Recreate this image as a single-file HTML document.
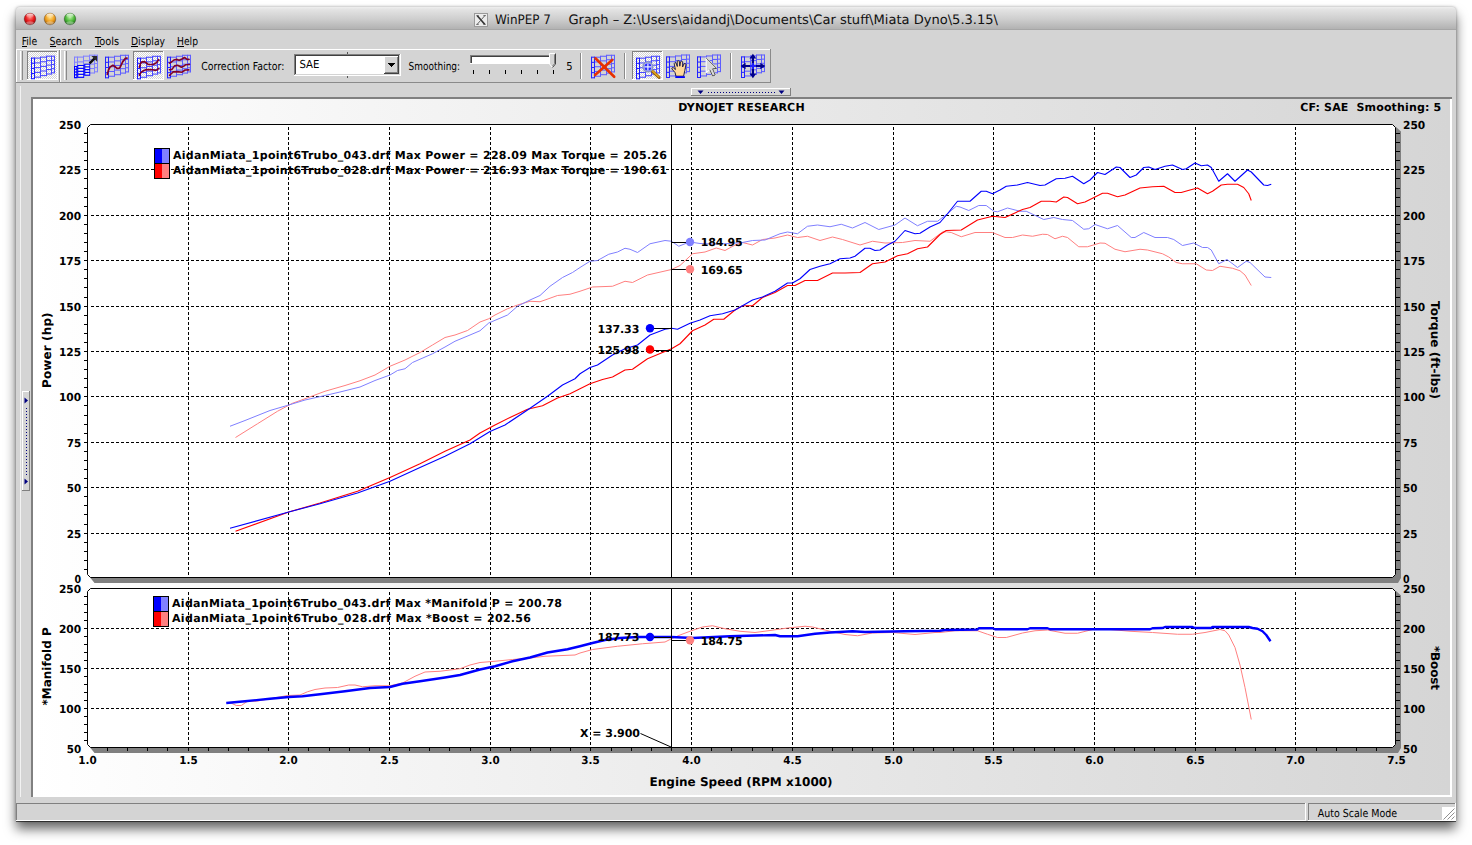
<!DOCTYPE html><html><head><meta charset="utf-8"><title>WinPEP 7</title>
<style>
html,body{margin:0;padding:0;background:#fff;}
body{width:1472px;height:845px;overflow:hidden;position:relative;font-family:"DejaVu Sans","Liberation Sans",sans-serif;}
#win{position:absolute;left:16px;top:7px;width:1440px;height:814px;background:#d4d4d4;border-radius:4px 4px 0 0;
 box-shadow:0 1px 0 rgba(0,0,0,.55),0 8px 12px rgba(0,0,0,.60),0 0 3px rgba(0,0,0,.35);}
#tb{position:absolute;left:0;top:0;width:100%;height:23px;border-radius:4px 4px 0 0;
 background:linear-gradient(#eeeeee 0,#e4e4e4 10%,#cecece 55%,#b2b2b2 100%);border-bottom:1px solid #a6a6a6;box-sizing:border-box}
svg{position:absolute;left:0;top:0}
.b{font-family:"DejaVu Sans","Liberation Sans",sans-serif;font-weight:bold}
.m{font-family:"DejaVu Sans Condensed","DejaVu Sans","Liberation Sans",sans-serif;font-size:11px}
.t{font-family:"DejaVu Sans","Liberation Sans",sans-serif;font-size:13px}
</style></head><body>
<div id="win"><div id="tb"></div></div>
<svg width="1472" height="845" viewBox="0 0 1472 845" shape-rendering="crispEdges" text-rendering="geometricPrecision">
<defs>
<linearGradient id="pg" x1="0" x2="1" y1="0" y2="0"><stop offset="0" stop-color="#ffffff"/><stop offset="1" stop-color="#d5d5d5"/></linearGradient>
<pattern id="dit" width="2" height="2" patternUnits="userSpaceOnUse"><rect width="2" height="2" fill="#ffffff"/><rect width="1" height="1" fill="#d4d4d4"/><rect x="1" y="1" width="1" height="1" fill="#d4d4d4"/></pattern>
<radialGradient id="gr" cx=".5" cy=".35" r=".65"><stop offset="0" stop-color="#ff8a80"/><stop offset=".55" stop-color="#e8191c"/><stop offset="1" stop-color="#8f0a0c"/></radialGradient>
<radialGradient id="gy" cx=".5" cy=".35" r=".65"><stop offset="0" stop-color="#ffe28a"/><stop offset=".55" stop-color="#f0a020"/><stop offset="1" stop-color="#9a5a08"/></radialGradient>
<radialGradient id="gg" cx=".5" cy=".35" r=".65"><stop offset="0" stop-color="#b8f0a0"/><stop offset=".55" stop-color="#4db83a"/><stop offset="1" stop-color="#1f6a18"/></radialGradient>
<linearGradient id="hl" x1="0" x2="0" y1="0" y2="1"><stop offset="0" stop-color="#fff" stop-opacity=".85"/><stop offset="1" stop-color="#fff" stop-opacity="0"/></linearGradient>
</defs>
<g shape-rendering="auto"><circle cx="30" cy="19" r="5.9" fill="url(#gr)" stroke="#000" stroke-opacity=".28" stroke-width=".8"/><ellipse cx="30" cy="15.8" rx="3.6" ry="2.2" fill="url(#hl)"/><ellipse cx="30" cy="23" rx="3.8" ry="1.8" fill="#fff" fill-opacity=".35"/></g>
<g shape-rendering="auto"><circle cx="50" cy="19" r="5.9" fill="url(#gy)" stroke="#000" stroke-opacity=".28" stroke-width=".8"/><ellipse cx="50" cy="15.8" rx="3.6" ry="2.2" fill="url(#hl)"/><ellipse cx="50" cy="23" rx="3.8" ry="1.8" fill="#fff" fill-opacity=".35"/></g>
<g shape-rendering="auto"><circle cx="70" cy="19" r="5.9" fill="url(#gg)" stroke="#000" stroke-opacity=".28" stroke-width=".8"/><ellipse cx="70" cy="15.8" rx="3.6" ry="2.2" fill="url(#hl)"/><ellipse cx="70" cy="23" rx="3.8" ry="1.8" fill="#fff" fill-opacity=".35"/></g>
<g shape-rendering="auto"><rect x="474.5" y="13.5" width="13" height="13" fill="#ececec" stroke="#9a9a9a" stroke-width="1"/><path d="M477.3 15.8 L484.7 24.2" stroke="#333" stroke-width="1.7" fill="none"/><path d="M484.7 15.8 L477.3 24.2" stroke="#555" stroke-width=".9" fill="none"/><path d="M476.3 15.6 h2.4 M483.4 15.6 h2.4 M476.3 24.4 h2.4 M483.4 24.4 h2.4" stroke="#444" stroke-width=".8"/></g>
<text x="495" y="24" class="t" fill="#111" textLength="56" lengthAdjust="spacingAndGlyphs">WinPEP 7</text>
<text x="568.5" y="24" class="t" fill="#111" textLength="429.5" lengthAdjust="spacingAndGlyphs">Graph – Z:\Users\aidandj\Documents\Car stuff\Miata Dyno\5.3.15\</text>
<text x="21.7" y="45" class="m" fill="#000" textLength="15.5" lengthAdjust="spacingAndGlyphs">File</text>
<rect x="21.7" y="46" width="5.5" height="1" fill="#000"/>
<text x="49.5" y="45" class="m" fill="#000" textLength="32.5" lengthAdjust="spacingAndGlyphs">Search</text>
<rect x="49.5" y="46" width="6.5" height="1" fill="#000"/>
<text x="95" y="45" class="m" fill="#000" textLength="24" lengthAdjust="spacingAndGlyphs">Tools</text>
<rect x="95" y="46" width="5.5" height="1" fill="#000"/>
<text x="131" y="45" class="m" fill="#000" textLength="34" lengthAdjust="spacingAndGlyphs">Display</text>
<rect x="131" y="46" width="7" height="1" fill="#000"/>
<text x="177" y="45" class="m" fill="#000" textLength="21" lengthAdjust="spacingAndGlyphs">Help</text>
<rect x="177" y="46" width="7" height="1" fill="#000"/>
<rect x="16" y="49" width="754" height="1" fill="#fff"/><rect x="16" y="49" width="1" height="33" fill="#fff"/>
<rect x="16" y="82" width="755" height="1" fill="#8a8a8a"/><rect x="770" y="49" width="1" height="34" fill="#8a8a8a"/>
<rect x="20" y="51" width="1" height="29" fill="#fff"/><rect x="21" y="51" width="1" height="29" fill="#d4d4d4"/><rect x="22" y="51" width="1" height="29" fill="#8a8a8a"/>
<rect x="64" y="51" width="1" height="29" fill="#fff"/><rect x="65" y="51" width="1" height="29" fill="#d4d4d4"/><rect x="66" y="51" width="1" height="29" fill="#8a8a8a"/>
<rect x="59" y="50" width="1" height="32" fill="#8a8a8a"/><rect x="60" y="50" width="1" height="32" fill="#fff"/>
<rect x="27" y="51" width="31" height="29" fill="url(#dit)"/>
<rect x="27" y="51" width="31" height="1" fill="#808080"/><rect x="27" y="51" width="1" height="29" fill="#808080"/>
<rect x="27" y="79" width="31" height="1" fill="#fff"/><rect x="57" y="51" width="1" height="29" fill="#fff"/>
<rect x="133" y="51" width="31" height="29" fill="url(#dit)"/>
<rect x="133" y="51" width="31" height="1" fill="#808080"/><rect x="133" y="51" width="1" height="29" fill="#808080"/>
<rect x="133" y="79" width="31" height="1" fill="#fff"/><rect x="163" y="51" width="1" height="29" fill="#fff"/>
<rect x="632" y="51" width="31" height="29" fill="url(#dit)"/>
<rect x="632" y="51" width="31" height="1" fill="#808080"/><rect x="632" y="51" width="1" height="29" fill="#808080"/>
<rect x="632" y="79" width="31" height="1" fill="#fff"/><rect x="662" y="51" width="1" height="29" fill="#fff"/>
<rect x="580" y="53" width="1" height="26" fill="#8a8a8a"/><rect x="581" y="53" width="1" height="26" fill="#fff"/>
<rect x="624" y="53" width="1" height="26" fill="#8a8a8a"/><rect x="625" y="53" width="1" height="26" fill="#fff"/>
<rect x="730" y="53" width="1" height="26" fill="#8a8a8a"/><rect x="731" y="53" width="1" height="26" fill="#fff"/>
<g shape-rendering="auto" stroke-width="1.05" fill="none"><line x1="31.50" y1="58.10" x2="34.50" y2="58.10" stroke="#1c1cff"/><line x1="31.50" y1="63.25" x2="34.50" y2="63.25" stroke="#1c1cff"/><line x1="31.50" y1="68.40" x2="34.50" y2="68.40" stroke="#1c1cff"/><line x1="31.50" y1="73.55" x2="34.50" y2="73.55" stroke="#1c1cff"/><line x1="31.50" y1="78.70" x2="34.50" y2="78.70" stroke="#1c1cff"/><line x1="34.50" y1="58.10" x2="40.50" y2="58.10" stroke="#4848ff"/><line x1="34.50" y1="62.86" x2="40.50" y2="62.86" stroke="#4848ff"/><line x1="34.50" y1="67.62" x2="40.50" y2="67.62" stroke="#4848ff"/><line x1="34.50" y1="72.39" x2="40.50" y2="72.39" stroke="#4848ff"/><line x1="34.50" y1="77.15" x2="40.50" y2="77.15" stroke="#4848ff"/><line x1="40.50" y1="57.15" x2="46.50" y2="57.15" stroke="#4848ff"/><line x1="40.50" y1="61.76" x2="46.50" y2="61.76" stroke="#4848ff"/><line x1="40.50" y1="66.38" x2="46.50" y2="66.38" stroke="#4848ff"/><line x1="40.50" y1="70.99" x2="46.50" y2="70.99" stroke="#4848ff"/><line x1="40.50" y1="75.60" x2="46.50" y2="75.60" stroke="#4848ff"/><line x1="46.50" y1="56.20" x2="51.50" y2="56.20" stroke="#4848ff"/><line x1="46.50" y1="60.65" x2="51.50" y2="60.65" stroke="#4848ff"/><line x1="46.50" y1="65.10" x2="51.50" y2="65.10" stroke="#4848ff"/><line x1="46.50" y1="69.55" x2="51.50" y2="69.55" stroke="#4848ff"/><line x1="46.50" y1="74.00" x2="51.50" y2="74.00" stroke="#4848ff"/><line x1="51.50" y1="56.20" x2="54.50" y2="56.20" stroke="#4848ff"/><line x1="51.50" y1="60.35" x2="54.50" y2="60.35" stroke="#4848ff"/><line x1="51.50" y1="64.50" x2="54.50" y2="64.50" stroke="#4848ff"/><line x1="51.50" y1="68.65" x2="54.50" y2="68.65" stroke="#4848ff"/><line x1="51.50" y1="72.80" x2="54.50" y2="72.80" stroke="#4848ff"/><line x1="31.50" y1="57.60" x2="31.50" y2="79.20" stroke="#1c1cff"/><line x1="34.50" y1="57.60" x2="34.50" y2="79.20" stroke="#1c1cff"/><line x1="40.50" y1="56.65" x2="40.50" y2="77.65" stroke="#4848ff"/><line x1="46.50" y1="55.70" x2="46.50" y2="76.10" stroke="#4848ff"/><line x1="51.50" y1="55.70" x2="51.50" y2="74.50" stroke="#4848ff"/><line x1="54.50" y1="55.70" x2="54.50" y2="73.30" stroke="#4848ff"/></g>
<g shape-rendering="auto" stroke-width="1.05" fill="none"><line x1="74.50" y1="57.10" x2="77.50" y2="57.10" stroke="#8080ff"/><line x1="74.50" y1="62.25" x2="77.50" y2="62.25" stroke="#8080ff"/><line x1="74.50" y1="67.40" x2="77.50" y2="67.40" stroke="#8080ff"/><line x1="74.50" y1="72.55" x2="77.50" y2="72.55" stroke="#8080ff"/><line x1="74.50" y1="77.70" x2="77.50" y2="77.70" stroke="#8080ff"/><line x1="77.50" y1="57.10" x2="83.50" y2="57.10" stroke="#8080ff"/><line x1="77.50" y1="61.86" x2="83.50" y2="61.86" stroke="#8080ff"/><line x1="77.50" y1="66.62" x2="83.50" y2="66.62" stroke="#8080ff"/><line x1="77.50" y1="71.39" x2="83.50" y2="71.39" stroke="#8080ff"/><line x1="77.50" y1="76.15" x2="83.50" y2="76.15" stroke="#8080ff"/><line x1="83.50" y1="56.15" x2="89.50" y2="56.15" stroke="#8080ff"/><line x1="83.50" y1="60.76" x2="89.50" y2="60.76" stroke="#8080ff"/><line x1="83.50" y1="65.38" x2="89.50" y2="65.38" stroke="#8080ff"/><line x1="83.50" y1="69.99" x2="89.50" y2="69.99" stroke="#8080ff"/><line x1="83.50" y1="74.60" x2="89.50" y2="74.60" stroke="#8080ff"/><line x1="89.50" y1="55.20" x2="94.50" y2="55.20" stroke="#8080ff"/><line x1="89.50" y1="59.65" x2="94.50" y2="59.65" stroke="#8080ff"/><line x1="89.50" y1="64.10" x2="94.50" y2="64.10" stroke="#8080ff"/><line x1="89.50" y1="68.55" x2="94.50" y2="68.55" stroke="#8080ff"/><line x1="89.50" y1="73.00" x2="94.50" y2="73.00" stroke="#8080ff"/><line x1="94.50" y1="55.20" x2="97.50" y2="55.20" stroke="#8080ff"/><line x1="94.50" y1="59.35" x2="97.50" y2="59.35" stroke="#8080ff"/><line x1="94.50" y1="63.50" x2="97.50" y2="63.50" stroke="#8080ff"/><line x1="94.50" y1="67.65" x2="97.50" y2="67.65" stroke="#8080ff"/><line x1="94.50" y1="71.80" x2="97.50" y2="71.80" stroke="#8080ff"/><line x1="74.50" y1="56.60" x2="74.50" y2="78.20" stroke="#8080ff"/><line x1="77.50" y1="56.60" x2="77.50" y2="78.20" stroke="#8080ff"/><line x1="83.50" y1="55.65" x2="83.50" y2="76.65" stroke="#8080ff"/><line x1="89.50" y1="54.70" x2="89.50" y2="75.10" stroke="#8080ff"/><line x1="94.50" y1="54.70" x2="94.50" y2="73.50" stroke="#8080ff"/><line x1="97.50" y1="54.70" x2="97.50" y2="72.30" stroke="#8080ff"/></g>
<g shape-rendering="auto"><rect x="74.0" y="66.0" width="3.2" height="12.2" fill="#0000ff"/><rect x="77.2" y="65.0" width="7.0" height="12.9" fill="#0000ff"/><rect x="84.2" y="63.7" width="6.0" height="12.1" fill="#0000ff"/><rect x="75.10" y="67.00" width="1.20" height="1.60" fill="#f2f2e6"/><rect x="75.10" y="69.80" width="1.20" height="1.60" fill="#f2f2e6"/><rect x="75.10" y="72.60" width="1.20" height="1.60" fill="#f2f2e6"/><rect x="75.10" y="75.40" width="1.20" height="1.60" fill="#f2f2e6"/><rect x="78.30" y="66.00" width="5.00" height="1.78" fill="#f2f2e6"/><rect x="78.30" y="68.97" width="5.00" height="1.78" fill="#f2f2e6"/><rect x="78.30" y="71.95" width="5.00" height="1.78" fill="#f2f2e6"/><rect x="78.30" y="74.93" width="5.00" height="1.78" fill="#f2f2e6"/><rect x="85.30" y="64.70" width="4.00" height="1.57" fill="#f2f2e6"/><rect x="85.30" y="67.47" width="4.00" height="1.57" fill="#f2f2e6"/><rect x="85.30" y="70.25" width="4.00" height="1.57" fill="#f2f2e6"/><rect x="85.30" y="73.03" width="4.00" height="1.57" fill="#f2f2e6"/><path d="M89.6 63.4 L94.6 58.4" stroke="#101010" stroke-width="2.4"/><path d="M91.4 56 H97.2 V61.8 Z" fill="#282828"/></g>
<g shape-rendering="auto" stroke-width="1.05" fill="none"><line x1="105.50" y1="57.20" x2="108.50" y2="57.20" stroke="#2424ff"/><line x1="105.50" y1="62.35" x2="108.50" y2="62.35" stroke="#2424ff"/><line x1="105.50" y1="67.50" x2="108.50" y2="67.50" stroke="#2424ff"/><line x1="105.50" y1="72.65" x2="108.50" y2="72.65" stroke="#2424ff"/><line x1="105.50" y1="77.80" x2="108.50" y2="77.80" stroke="#2424ff"/><line x1="108.50" y1="57.20" x2="114.50" y2="57.20" stroke="#5e5eff"/><line x1="108.50" y1="61.96" x2="114.50" y2="61.96" stroke="#5e5eff"/><line x1="108.50" y1="66.72" x2="114.50" y2="66.72" stroke="#5e5eff"/><line x1="108.50" y1="71.49" x2="114.50" y2="71.49" stroke="#5e5eff"/><line x1="108.50" y1="76.25" x2="114.50" y2="76.25" stroke="#5e5eff"/><line x1="114.50" y1="56.25" x2="120.50" y2="56.25" stroke="#5e5eff"/><line x1="114.50" y1="60.86" x2="120.50" y2="60.86" stroke="#5e5eff"/><line x1="114.50" y1="65.47" x2="120.50" y2="65.47" stroke="#5e5eff"/><line x1="114.50" y1="70.09" x2="120.50" y2="70.09" stroke="#5e5eff"/><line x1="114.50" y1="74.70" x2="120.50" y2="74.70" stroke="#5e5eff"/><line x1="120.50" y1="55.30" x2="125.50" y2="55.30" stroke="#5e5eff"/><line x1="120.50" y1="59.75" x2="125.50" y2="59.75" stroke="#5e5eff"/><line x1="120.50" y1="64.20" x2="125.50" y2="64.20" stroke="#5e5eff"/><line x1="120.50" y1="68.65" x2="125.50" y2="68.65" stroke="#5e5eff"/><line x1="120.50" y1="73.10" x2="125.50" y2="73.10" stroke="#5e5eff"/><line x1="125.50" y1="55.30" x2="128.50" y2="55.30" stroke="#5e5eff"/><line x1="125.50" y1="59.45" x2="128.50" y2="59.45" stroke="#5e5eff"/><line x1="125.50" y1="63.60" x2="128.50" y2="63.60" stroke="#5e5eff"/><line x1="125.50" y1="67.75" x2="128.50" y2="67.75" stroke="#5e5eff"/><line x1="125.50" y1="71.90" x2="128.50" y2="71.90" stroke="#5e5eff"/><line x1="105.50" y1="56.70" x2="105.50" y2="78.30" stroke="#2424ff"/><line x1="108.50" y1="56.70" x2="108.50" y2="78.30" stroke="#2424ff"/><line x1="114.50" y1="55.75" x2="114.50" y2="76.75" stroke="#5e5eff"/><line x1="120.50" y1="54.80" x2="120.50" y2="75.20" stroke="#5e5eff"/><line x1="125.50" y1="54.80" x2="125.50" y2="73.60" stroke="#5e5eff"/><line x1="128.50" y1="54.80" x2="128.50" y2="72.40" stroke="#5e5eff"/></g>
<polyline shape-rendering="auto" fill="none" stroke-linejoin="round" stroke-linecap="round" stroke="#800028" stroke-width="1.7" points="107.3,74.4 108.5,70.0 110.1,66.9 112.9,65.3 114.8,66.5 117.0,68.4 119.5,68.1 121.0,65.5 122.6,61.9 125.4,58.4 127.0,58.1"/>
<g shape-rendering="auto" stroke-width="1.05" fill="none"><line x1="137.50" y1="58.20" x2="140.50" y2="58.20" stroke="#1c1cff"/><line x1="137.50" y1="63.35" x2="140.50" y2="63.35" stroke="#1c1cff"/><line x1="137.50" y1="68.50" x2="140.50" y2="68.50" stroke="#1c1cff"/><line x1="137.50" y1="73.65" x2="140.50" y2="73.65" stroke="#1c1cff"/><line x1="137.50" y1="78.80" x2="140.50" y2="78.80" stroke="#1c1cff"/><line x1="140.50" y1="58.20" x2="146.50" y2="58.20" stroke="#4848ff"/><line x1="140.50" y1="62.96" x2="146.50" y2="62.96" stroke="#4848ff"/><line x1="140.50" y1="67.72" x2="146.50" y2="67.72" stroke="#4848ff"/><line x1="140.50" y1="72.49" x2="146.50" y2="72.49" stroke="#4848ff"/><line x1="140.50" y1="77.25" x2="146.50" y2="77.25" stroke="#4848ff"/><line x1="146.50" y1="57.25" x2="152.50" y2="57.25" stroke="#4848ff"/><line x1="146.50" y1="61.86" x2="152.50" y2="61.86" stroke="#4848ff"/><line x1="146.50" y1="66.47" x2="152.50" y2="66.47" stroke="#4848ff"/><line x1="146.50" y1="71.09" x2="152.50" y2="71.09" stroke="#4848ff"/><line x1="146.50" y1="75.70" x2="152.50" y2="75.70" stroke="#4848ff"/><line x1="152.50" y1="56.30" x2="157.50" y2="56.30" stroke="#4848ff"/><line x1="152.50" y1="60.75" x2="157.50" y2="60.75" stroke="#4848ff"/><line x1="152.50" y1="65.20" x2="157.50" y2="65.20" stroke="#4848ff"/><line x1="152.50" y1="69.65" x2="157.50" y2="69.65" stroke="#4848ff"/><line x1="152.50" y1="74.10" x2="157.50" y2="74.10" stroke="#4848ff"/><line x1="157.50" y1="56.30" x2="160.50" y2="56.30" stroke="#4848ff"/><line x1="157.50" y1="60.45" x2="160.50" y2="60.45" stroke="#4848ff"/><line x1="157.50" y1="64.60" x2="160.50" y2="64.60" stroke="#4848ff"/><line x1="157.50" y1="68.75" x2="160.50" y2="68.75" stroke="#4848ff"/><line x1="157.50" y1="72.90" x2="160.50" y2="72.90" stroke="#4848ff"/><line x1="137.50" y1="57.70" x2="137.50" y2="79.30" stroke="#1c1cff"/><line x1="140.50" y1="57.70" x2="140.50" y2="79.30" stroke="#1c1cff"/><line x1="146.50" y1="56.75" x2="146.50" y2="77.75" stroke="#4848ff"/><line x1="152.50" y1="55.80" x2="152.50" y2="76.20" stroke="#4848ff"/><line x1="157.50" y1="55.80" x2="157.50" y2="74.60" stroke="#4848ff"/><line x1="160.50" y1="55.80" x2="160.50" y2="73.40" stroke="#4848ff"/></g>
<polyline shape-rendering="auto" fill="none" stroke-linejoin="round" stroke-linecap="round" stroke="#800028" stroke-width="1.7" points="139.4,67.2 140.3,64.2 141.4,62.2 144.5,61.6 146.5,63.0 148.2,64.4 153.2,64.5 156.4,62.8 158.6,59.7"/>
<polyline shape-rendering="auto" fill="none" stroke-linejoin="round" stroke-linecap="round" stroke="#800028" stroke-width="1.7" points="139.4,75.3 140.5,73.0 142.0,71.6 145.8,69.7 152.0,69.5 154.5,70.3 157.0,70.0 158.6,68.4"/>
<g shape-rendering="auto" stroke-width="1.05" fill="none"><line x1="167.50" y1="57.20" x2="170.50" y2="57.20" stroke="#2424ff"/><line x1="167.50" y1="62.35" x2="170.50" y2="62.35" stroke="#2424ff"/><line x1="167.50" y1="67.50" x2="170.50" y2="67.50" stroke="#2424ff"/><line x1="167.50" y1="72.65" x2="170.50" y2="72.65" stroke="#2424ff"/><line x1="167.50" y1="77.80" x2="170.50" y2="77.80" stroke="#2424ff"/><line x1="170.50" y1="57.20" x2="176.50" y2="57.20" stroke="#5e5eff"/><line x1="170.50" y1="61.96" x2="176.50" y2="61.96" stroke="#5e5eff"/><line x1="170.50" y1="66.72" x2="176.50" y2="66.72" stroke="#5e5eff"/><line x1="170.50" y1="71.49" x2="176.50" y2="71.49" stroke="#5e5eff"/><line x1="170.50" y1="76.25" x2="176.50" y2="76.25" stroke="#5e5eff"/><line x1="176.50" y1="56.25" x2="182.50" y2="56.25" stroke="#5e5eff"/><line x1="176.50" y1="60.86" x2="182.50" y2="60.86" stroke="#5e5eff"/><line x1="176.50" y1="65.47" x2="182.50" y2="65.47" stroke="#5e5eff"/><line x1="176.50" y1="70.09" x2="182.50" y2="70.09" stroke="#5e5eff"/><line x1="176.50" y1="74.70" x2="182.50" y2="74.70" stroke="#5e5eff"/><line x1="182.50" y1="55.30" x2="187.50" y2="55.30" stroke="#5e5eff"/><line x1="182.50" y1="59.75" x2="187.50" y2="59.75" stroke="#5e5eff"/><line x1="182.50" y1="64.20" x2="187.50" y2="64.20" stroke="#5e5eff"/><line x1="182.50" y1="68.65" x2="187.50" y2="68.65" stroke="#5e5eff"/><line x1="182.50" y1="73.10" x2="187.50" y2="73.10" stroke="#5e5eff"/><line x1="187.50" y1="55.30" x2="190.50" y2="55.30" stroke="#5e5eff"/><line x1="187.50" y1="59.45" x2="190.50" y2="59.45" stroke="#5e5eff"/><line x1="187.50" y1="63.60" x2="190.50" y2="63.60" stroke="#5e5eff"/><line x1="187.50" y1="67.75" x2="190.50" y2="67.75" stroke="#5e5eff"/><line x1="187.50" y1="71.90" x2="190.50" y2="71.90" stroke="#5e5eff"/><line x1="167.50" y1="56.70" x2="167.50" y2="78.30" stroke="#2424ff"/><line x1="170.50" y1="56.70" x2="170.50" y2="78.30" stroke="#2424ff"/><line x1="176.50" y1="55.75" x2="176.50" y2="76.75" stroke="#5e5eff"/><line x1="182.50" y1="54.80" x2="182.50" y2="75.20" stroke="#5e5eff"/><line x1="187.50" y1="54.80" x2="187.50" y2="73.60" stroke="#5e5eff"/><line x1="190.50" y1="54.80" x2="190.50" y2="72.40" stroke="#5e5eff"/></g>
<polyline shape-rendering="auto" fill="none" stroke-linejoin="round" stroke-linecap="round" stroke="#800028" stroke-width="1.6" points="169.5,63.1 171.5,62.0 173.9,60.0 177.0,59.4 179.2,60.3 182.0,59.0 184.5,57.5 187.0,59.4 188.9,59.4"/>
<polyline shape-rendering="auto" fill="none" stroke-linejoin="round" stroke-linecap="round" stroke="#800028" stroke-width="1.6" points="169.5,69.7 172.0,69.4 174.5,65.9 177.6,65.3 181.4,67.2 183.5,66.3 185.8,64.7 189.5,64.5"/>
<polyline shape-rendering="auto" fill="none" stroke-linejoin="round" stroke-linecap="round" stroke="#800028" stroke-width="1.6" points="169.5,75.3 171.5,73.5 173.2,71.9 177.0,71.6 182.0,72.2 185.1,70.0 188.9,69.9"/>
<text x="201.3" y="69.6" class="m" fill="#000" textLength="83" lengthAdjust="spacingAndGlyphs">Correction Factor:</text>
<rect x="294" y="54" width="107" height="22" fill="#fff"/>
<rect x="294" y="54" width="107" height="1" fill="#808080"/><rect x="294" y="54" width="1" height="22" fill="#808080"/>
<rect x="295" y="55" width="105" height="1" fill="#404040"/><rect x="295" y="55" width="1" height="20" fill="#404040"/>
<rect x="294" y="75" width="107" height="1" fill="#fff"/><rect x="400" y="54" width="1" height="22" fill="#fff"/>
<rect x="295" y="74" width="105" height="1" fill="#d4d4d4"/><rect x="399" y="55" width="1" height="20" fill="#d4d4d4"/>
<rect x="384" y="56" width="15" height="18" fill="#d4d4d4"/><rect x="384" y="56" width="15" height="1" fill="#fff"/><rect x="384" y="56" width="1" height="18" fill="#fff"/>
<rect x="384" y="73" width="15" height="1" fill="#404040"/><rect x="398" y="56" width="1" height="18" fill="#404040"/><rect x="385" y="72" width="13" height="1" fill="#808080"/><rect x="397" y="57" width="1" height="16" fill="#808080"/>
<path d="M387.5 63 H395.5 L391.5 67 Z" fill="#000"/>
<text x="299.4" y="67.6" class="m" fill="#000" textLength="20" lengthAdjust="spacingAndGlyphs">SAE</text>
<rect x="347" y="52" width="1" height="2" fill="#555"/><rect x="347" y="76" width="1" height="2" fill="#555"/>
<text x="408.6" y="69.8" class="m" fill="#000" textLength="51.5" lengthAdjust="spacingAndGlyphs">Smoothing:</text>
<rect x="470" y="55" width="85" height="9" fill="#fff"/><rect x="470" y="55" width="85" height="1" fill="#808080"/><rect x="470" y="55" width="1" height="9" fill="#808080"/><rect x="471" y="56" width="83" height="1" fill="#404040"/><rect x="471" y="56" width="1" height="7" fill="#404040"/><rect x="470" y="63" width="85" height="1" fill="#fff"/>
<g shape-rendering="auto"><path d="M549.5 53.5 H555.5 V64 L552.5 67.5 L549.5 64 Z" fill="#d4d4d4" stroke="#fff" stroke-width="1"/><path d="M555.5 53.5 V64 L552.5 67.5" fill="none" stroke="#404040" stroke-width="1"/><path d="M554.5 54.5 V63.7 L552.5 66" fill="none" stroke="#808080" stroke-width="1"/></g>
<rect x="473" y="70" width="1" height="4" fill="#000"/>
<rect x="489" y="70" width="1" height="4" fill="#000"/>
<rect x="505" y="70" width="1" height="4" fill="#000"/>
<rect x="521" y="70" width="1" height="4" fill="#000"/>
<rect x="537" y="70" width="1" height="4" fill="#000"/>
<rect x="553" y="70" width="1" height="4" fill="#000"/>
<text x="566.3" y="69.6" class="m" fill="#000">5</text>
<g shape-rendering="auto" stroke-width="1.05" fill="none"><line x1="591.50" y1="57.20" x2="594.50" y2="57.20" stroke="#2424ff"/><line x1="591.50" y1="62.35" x2="594.50" y2="62.35" stroke="#2424ff"/><line x1="591.50" y1="67.50" x2="594.50" y2="67.50" stroke="#2424ff"/><line x1="591.50" y1="72.65" x2="594.50" y2="72.65" stroke="#2424ff"/><line x1="591.50" y1="77.80" x2="594.50" y2="77.80" stroke="#2424ff"/><line x1="594.50" y1="57.20" x2="600.50" y2="57.20" stroke="#5e5eff"/><line x1="594.50" y1="61.96" x2="600.50" y2="61.96" stroke="#5e5eff"/><line x1="594.50" y1="66.72" x2="600.50" y2="66.72" stroke="#5e5eff"/><line x1="594.50" y1="71.49" x2="600.50" y2="71.49" stroke="#5e5eff"/><line x1="594.50" y1="76.25" x2="600.50" y2="76.25" stroke="#5e5eff"/><line x1="600.50" y1="56.25" x2="606.50" y2="56.25" stroke="#5e5eff"/><line x1="600.50" y1="60.86" x2="606.50" y2="60.86" stroke="#5e5eff"/><line x1="600.50" y1="65.47" x2="606.50" y2="65.47" stroke="#5e5eff"/><line x1="600.50" y1="70.09" x2="606.50" y2="70.09" stroke="#5e5eff"/><line x1="600.50" y1="74.70" x2="606.50" y2="74.70" stroke="#5e5eff"/><line x1="606.50" y1="55.30" x2="611.50" y2="55.30" stroke="#5e5eff"/><line x1="606.50" y1="59.75" x2="611.50" y2="59.75" stroke="#5e5eff"/><line x1="606.50" y1="64.20" x2="611.50" y2="64.20" stroke="#5e5eff"/><line x1="606.50" y1="68.65" x2="611.50" y2="68.65" stroke="#5e5eff"/><line x1="606.50" y1="73.10" x2="611.50" y2="73.10" stroke="#5e5eff"/><line x1="611.50" y1="55.30" x2="614.50" y2="55.30" stroke="#5e5eff"/><line x1="611.50" y1="59.45" x2="614.50" y2="59.45" stroke="#5e5eff"/><line x1="611.50" y1="63.60" x2="614.50" y2="63.60" stroke="#5e5eff"/><line x1="611.50" y1="67.75" x2="614.50" y2="67.75" stroke="#5e5eff"/><line x1="611.50" y1="71.90" x2="614.50" y2="71.90" stroke="#5e5eff"/><line x1="591.50" y1="56.70" x2="591.50" y2="78.30" stroke="#2424ff"/><line x1="594.50" y1="56.70" x2="594.50" y2="78.30" stroke="#2424ff"/><line x1="600.50" y1="55.75" x2="600.50" y2="76.75" stroke="#5e5eff"/><line x1="606.50" y1="54.80" x2="606.50" y2="75.20" stroke="#5e5eff"/><line x1="611.50" y1="54.80" x2="611.50" y2="73.60" stroke="#5e5eff"/><line x1="614.50" y1="54.80" x2="614.50" y2="72.40" stroke="#5e5eff"/></g>
<path shape-rendering="auto" d="M595.4 58.3 L614.2 76.8 M612.2 60 L595 75" stroke="#e83000" stroke-width="2.6" stroke-linecap="round"/>
<g shape-rendering="auto" stroke-width="1.05" fill="none"><line x1="636.50" y1="58.20" x2="639.50" y2="58.20" stroke="#1c1cff"/><line x1="636.50" y1="63.35" x2="639.50" y2="63.35" stroke="#1c1cff"/><line x1="636.50" y1="68.50" x2="639.50" y2="68.50" stroke="#1c1cff"/><line x1="636.50" y1="73.65" x2="639.50" y2="73.65" stroke="#1c1cff"/><line x1="636.50" y1="78.80" x2="639.50" y2="78.80" stroke="#1c1cff"/><line x1="639.50" y1="58.20" x2="645.50" y2="58.20" stroke="#4848ff"/><line x1="639.50" y1="62.96" x2="645.50" y2="62.96" stroke="#4848ff"/><line x1="639.50" y1="67.72" x2="645.50" y2="67.72" stroke="#4848ff"/><line x1="639.50" y1="72.49" x2="645.50" y2="72.49" stroke="#4848ff"/><line x1="639.50" y1="77.25" x2="645.50" y2="77.25" stroke="#4848ff"/><line x1="645.50" y1="57.25" x2="651.50" y2="57.25" stroke="#4848ff"/><line x1="645.50" y1="61.86" x2="651.50" y2="61.86" stroke="#4848ff"/><line x1="645.50" y1="66.47" x2="651.50" y2="66.47" stroke="#4848ff"/><line x1="645.50" y1="71.09" x2="651.50" y2="71.09" stroke="#4848ff"/><line x1="645.50" y1="75.70" x2="651.50" y2="75.70" stroke="#4848ff"/><line x1="651.50" y1="56.30" x2="656.50" y2="56.30" stroke="#4848ff"/><line x1="651.50" y1="60.75" x2="656.50" y2="60.75" stroke="#4848ff"/><line x1="651.50" y1="65.20" x2="656.50" y2="65.20" stroke="#4848ff"/><line x1="651.50" y1="69.65" x2="656.50" y2="69.65" stroke="#4848ff"/><line x1="651.50" y1="74.10" x2="656.50" y2="74.10" stroke="#4848ff"/><line x1="656.50" y1="56.30" x2="659.50" y2="56.30" stroke="#4848ff"/><line x1="656.50" y1="60.45" x2="659.50" y2="60.45" stroke="#4848ff"/><line x1="656.50" y1="64.60" x2="659.50" y2="64.60" stroke="#4848ff"/><line x1="656.50" y1="68.75" x2="659.50" y2="68.75" stroke="#4848ff"/><line x1="656.50" y1="72.90" x2="659.50" y2="72.90" stroke="#4848ff"/><line x1="636.50" y1="57.70" x2="636.50" y2="79.30" stroke="#1c1cff"/><line x1="639.50" y1="57.70" x2="639.50" y2="79.30" stroke="#1c1cff"/><line x1="645.50" y1="56.75" x2="645.50" y2="77.75" stroke="#4848ff"/><line x1="651.50" y1="55.80" x2="651.50" y2="76.20" stroke="#4848ff"/><line x1="656.50" y1="55.80" x2="656.50" y2="74.60" stroke="#4848ff"/><line x1="659.50" y1="55.80" x2="659.50" y2="73.40" stroke="#4848ff"/></g>
<g shape-rendering="auto"><path d="M652.4 71.4 L659 77.4" stroke="#8a5a08" stroke-width="3" stroke-linecap="round"/><path d="M652.6 71.2 L658.8 76.9" stroke="#e0a018" stroke-width="1.7" stroke-linecap="round"/><circle cx="647.9" cy="66.9" r="4.9" fill="#eef2ff" stroke="#8a96c4" stroke-width="1.5"/><circle cx="647.9" cy="66.9" r="3.6" fill="#2a2aff"/><path d="M644.5 66.9 H651.3 M647.9 63.5 V70.3" stroke="#e8f0ff" stroke-width="1.2"/></g>
<g shape-rendering="auto" stroke-width="1.05" fill="none"><line x1="666.50" y1="56.90" x2="669.50" y2="56.90" stroke="#2424ff"/><line x1="666.50" y1="62.05" x2="669.50" y2="62.05" stroke="#2424ff"/><line x1="666.50" y1="67.20" x2="669.50" y2="67.20" stroke="#2424ff"/><line x1="666.50" y1="72.35" x2="669.50" y2="72.35" stroke="#2424ff"/><line x1="666.50" y1="77.50" x2="669.50" y2="77.50" stroke="#2424ff"/><line x1="669.50" y1="56.90" x2="675.50" y2="56.90" stroke="#5e5eff"/><line x1="669.50" y1="61.66" x2="675.50" y2="61.66" stroke="#5e5eff"/><line x1="669.50" y1="66.42" x2="675.50" y2="66.42" stroke="#5e5eff"/><line x1="669.50" y1="71.19" x2="675.50" y2="71.19" stroke="#5e5eff"/><line x1="669.50" y1="75.95" x2="675.50" y2="75.95" stroke="#5e5eff"/><line x1="675.50" y1="55.95" x2="681.50" y2="55.95" stroke="#5e5eff"/><line x1="675.50" y1="60.56" x2="681.50" y2="60.56" stroke="#5e5eff"/><line x1="675.50" y1="65.17" x2="681.50" y2="65.17" stroke="#5e5eff"/><line x1="675.50" y1="69.79" x2="681.50" y2="69.79" stroke="#5e5eff"/><line x1="675.50" y1="74.40" x2="681.50" y2="74.40" stroke="#5e5eff"/><line x1="681.50" y1="55.00" x2="686.50" y2="55.00" stroke="#5e5eff"/><line x1="681.50" y1="59.45" x2="686.50" y2="59.45" stroke="#5e5eff"/><line x1="681.50" y1="63.90" x2="686.50" y2="63.90" stroke="#5e5eff"/><line x1="681.50" y1="68.35" x2="686.50" y2="68.35" stroke="#5e5eff"/><line x1="681.50" y1="72.80" x2="686.50" y2="72.80" stroke="#5e5eff"/><line x1="686.50" y1="55.00" x2="689.50" y2="55.00" stroke="#5e5eff"/><line x1="686.50" y1="59.15" x2="689.50" y2="59.15" stroke="#5e5eff"/><line x1="686.50" y1="63.30" x2="689.50" y2="63.30" stroke="#5e5eff"/><line x1="686.50" y1="67.45" x2="689.50" y2="67.45" stroke="#5e5eff"/><line x1="686.50" y1="71.60" x2="689.50" y2="71.60" stroke="#5e5eff"/><line x1="666.50" y1="56.40" x2="666.50" y2="78.00" stroke="#2424ff"/><line x1="669.50" y1="56.40" x2="669.50" y2="78.00" stroke="#2424ff"/><line x1="675.50" y1="55.45" x2="675.50" y2="76.45" stroke="#5e5eff"/><line x1="681.50" y1="54.50" x2="681.50" y2="74.90" stroke="#5e5eff"/><line x1="686.50" y1="54.50" x2="686.50" y2="73.30" stroke="#5e5eff"/><line x1="689.50" y1="54.50" x2="689.50" y2="72.10" stroke="#5e5eff"/></g>
<g shape-rendering="auto"><path d="M676 76.2 L675 72.5 L671.8 68.8 Q671.6 67.4 673.2 67.6 L675.4 69.6 L674.2 63.6 Q674.6 62.2 676 62.8 L677.3 66.5 L677.2 61.2 Q678.2 60 679.3 61.2 L679.8 66.2 L680.6 61.6 Q681.8 60.6 682.7 61.8 L682.6 67 L684 63.8 Q685.2 63 686 64.2 L684.8 70.5 L683.6 76.2 Z" fill="#ffd898" stroke="#101040" stroke-width=".9" stroke-linejoin="round"/><rect x="675.3" y="76.2" width="9.6" height="1.8" fill="#0000ff"/></g>
<g shape-rendering="auto" stroke-width="1.05" fill="none"><line x1="697.50" y1="56.90" x2="700.50" y2="56.90" stroke="#2424ff"/><line x1="697.50" y1="62.05" x2="700.50" y2="62.05" stroke="#2424ff"/><line x1="697.50" y1="67.20" x2="700.50" y2="67.20" stroke="#2424ff"/><line x1="697.50" y1="72.35" x2="700.50" y2="72.35" stroke="#2424ff"/><line x1="697.50" y1="77.50" x2="700.50" y2="77.50" stroke="#2424ff"/><line x1="700.50" y1="56.90" x2="706.50" y2="56.90" stroke="#5e5eff"/><line x1="700.50" y1="61.66" x2="706.50" y2="61.66" stroke="#5e5eff"/><line x1="700.50" y1="66.42" x2="706.50" y2="66.42" stroke="#5e5eff"/><line x1="700.50" y1="71.19" x2="706.50" y2="71.19" stroke="#5e5eff"/><line x1="700.50" y1="75.95" x2="706.50" y2="75.95" stroke="#5e5eff"/><line x1="706.50" y1="55.95" x2="712.50" y2="55.95" stroke="#5e5eff"/><line x1="706.50" y1="60.56" x2="712.50" y2="60.56" stroke="#5e5eff"/><line x1="706.50" y1="65.17" x2="712.50" y2="65.17" stroke="#5e5eff"/><line x1="706.50" y1="69.79" x2="712.50" y2="69.79" stroke="#5e5eff"/><line x1="706.50" y1="74.40" x2="712.50" y2="74.40" stroke="#5e5eff"/><line x1="712.50" y1="55.00" x2="717.50" y2="55.00" stroke="#5e5eff"/><line x1="712.50" y1="59.45" x2="717.50" y2="59.45" stroke="#5e5eff"/><line x1="712.50" y1="63.90" x2="717.50" y2="63.90" stroke="#5e5eff"/><line x1="712.50" y1="68.35" x2="717.50" y2="68.35" stroke="#5e5eff"/><line x1="712.50" y1="72.80" x2="717.50" y2="72.80" stroke="#5e5eff"/><line x1="717.50" y1="55.00" x2="720.50" y2="55.00" stroke="#5e5eff"/><line x1="717.50" y1="59.15" x2="720.50" y2="59.15" stroke="#5e5eff"/><line x1="717.50" y1="63.30" x2="720.50" y2="63.30" stroke="#5e5eff"/><line x1="717.50" y1="67.45" x2="720.50" y2="67.45" stroke="#5e5eff"/><line x1="717.50" y1="71.60" x2="720.50" y2="71.60" stroke="#5e5eff"/><line x1="697.50" y1="56.40" x2="697.50" y2="78.00" stroke="#2424ff"/><line x1="700.50" y1="56.40" x2="700.50" y2="78.00" stroke="#2424ff"/><line x1="706.50" y1="55.45" x2="706.50" y2="76.45" stroke="#5e5eff"/><line x1="712.50" y1="54.50" x2="712.50" y2="74.90" stroke="#5e5eff"/><line x1="717.50" y1="54.50" x2="717.50" y2="73.30" stroke="#5e5eff"/><line x1="720.50" y1="54.50" x2="720.50" y2="72.10" stroke="#5e5eff"/></g>
<g shape-rendering="auto"><path d="M706.2 58 V72.6 L709.8 69.6 L712.6 76 L715.2 75 L712.6 68.8 L716.6 68.4 Z" fill="#d8d8d8" stroke="#fff" stroke-width="1.2" stroke-linejoin="round"/><path d="M706.2 58 L716.6 68.4 L712.6 68.8 L715.2 75 L712.6 76 L709.8 69.6" fill="none" stroke="#505050" stroke-width="1" stroke-linejoin="round"/></g>
<g shape-rendering="auto" stroke-width="1.05" fill="none"><line x1="741.50" y1="56.90" x2="744.50" y2="56.90" stroke="#2424ff"/><line x1="741.50" y1="62.05" x2="744.50" y2="62.05" stroke="#2424ff"/><line x1="741.50" y1="67.20" x2="744.50" y2="67.20" stroke="#2424ff"/><line x1="741.50" y1="72.35" x2="744.50" y2="72.35" stroke="#2424ff"/><line x1="741.50" y1="77.50" x2="744.50" y2="77.50" stroke="#2424ff"/><line x1="744.50" y1="56.90" x2="750.50" y2="56.90" stroke="#5e5eff"/><line x1="744.50" y1="61.66" x2="750.50" y2="61.66" stroke="#5e5eff"/><line x1="744.50" y1="66.42" x2="750.50" y2="66.42" stroke="#5e5eff"/><line x1="744.50" y1="71.19" x2="750.50" y2="71.19" stroke="#5e5eff"/><line x1="744.50" y1="75.95" x2="750.50" y2="75.95" stroke="#5e5eff"/><line x1="750.50" y1="55.95" x2="756.50" y2="55.95" stroke="#5e5eff"/><line x1="750.50" y1="60.56" x2="756.50" y2="60.56" stroke="#5e5eff"/><line x1="750.50" y1="65.17" x2="756.50" y2="65.17" stroke="#5e5eff"/><line x1="750.50" y1="69.79" x2="756.50" y2="69.79" stroke="#5e5eff"/><line x1="750.50" y1="74.40" x2="756.50" y2="74.40" stroke="#5e5eff"/><line x1="756.50" y1="55.00" x2="761.50" y2="55.00" stroke="#5e5eff"/><line x1="756.50" y1="59.45" x2="761.50" y2="59.45" stroke="#5e5eff"/><line x1="756.50" y1="63.90" x2="761.50" y2="63.90" stroke="#5e5eff"/><line x1="756.50" y1="68.35" x2="761.50" y2="68.35" stroke="#5e5eff"/><line x1="756.50" y1="72.80" x2="761.50" y2="72.80" stroke="#5e5eff"/><line x1="761.50" y1="55.00" x2="764.50" y2="55.00" stroke="#5e5eff"/><line x1="761.50" y1="59.15" x2="764.50" y2="59.15" stroke="#5e5eff"/><line x1="761.50" y1="63.30" x2="764.50" y2="63.30" stroke="#5e5eff"/><line x1="761.50" y1="67.45" x2="764.50" y2="67.45" stroke="#5e5eff"/><line x1="761.50" y1="71.60" x2="764.50" y2="71.60" stroke="#5e5eff"/><line x1="741.50" y1="56.40" x2="741.50" y2="78.00" stroke="#2424ff"/><line x1="744.50" y1="56.40" x2="744.50" y2="78.00" stroke="#2424ff"/><line x1="750.50" y1="55.45" x2="750.50" y2="76.45" stroke="#5e5eff"/><line x1="756.50" y1="54.50" x2="756.50" y2="74.90" stroke="#5e5eff"/><line x1="761.50" y1="54.50" x2="761.50" y2="73.30" stroke="#5e5eff"/><line x1="764.50" y1="54.50" x2="764.50" y2="72.10" stroke="#5e5eff"/></g>
<g shape-rendering="auto" fill="#00008c" stroke="#00008c"><path d="M752.9 57 V75 M744 66 H762" stroke-width="2.2" fill="none"/><path d="M752.9 53.8 L756.3 58.4 H749.5 Z M752.9 78.2 L756.3 73.6 H749.5 Z M740.6 66 L745.6 62.7 V69.3 Z M765.3 66 L760.3 62.7 V69.3 Z" stroke="none"/><path d="M752.9 63 V69 M750 66 H756" stroke="#2020ff" stroke-width="2"/></g>
<rect x="691" y="88" width="100" height="8" fill="#d4d4d4"/><rect x="691" y="88" width="100" height="1" fill="#fff"/><rect x="691" y="88" width="1" height="8" fill="#fff"/><rect x="691" y="95" width="100" height="1" fill="#808080"/><rect x="790" y="88" width="1" height="8" fill="#808080"/>
<path d="M697.5 90.5 H703.5 L700.5 94 Z M778.5 90.5 H784.5 L781.5 94 Z" fill="#000080" shape-rendering="auto"/>
<line x1="708" y1="92.5" x2="776" y2="92.5" stroke="#000080" stroke-width="1" stroke-dasharray="1 2"/>
<rect x="20" y="86" width="1" height="711" fill="#f2f2f2"/>
<rect x="22" y="391" width="8" height="100" fill="#d4d4d4"/><rect x="22" y="391" width="8" height="1" fill="#fff"/><rect x="22" y="391" width="1" height="100" fill="#fff"/><rect x="22" y="490" width="8" height="1" fill="#808080"/><rect x="29" y="391" width="1" height="100" fill="#808080"/>
<path d="M24.5 397.5 V403.5 L28 400.5 Z M24.5 478.5 V484.5 L28 481.5 Z" fill="#000080" shape-rendering="auto"/>
<line x1="26.5" y1="408" x2="26.5" y2="476" stroke="#000080" stroke-width="1" stroke-dasharray="1 2"/>
<rect x="31" y="97" width="1421" height="700" fill="#808080"/>
<rect x="33" y="99" width="1419" height="698" fill="#fff"/>
<rect x="33" y="99" width="1417" height="696" fill="url(#pg)"/>
<rect x="16" y="803" width="1290" height="1" fill="#808080"/><rect x="16" y="803" width="1" height="17" fill="#808080"/><rect x="1305" y="803" width="1" height="18" fill="#fff"/><rect x="16" y="820" width="1290" height="1" fill="#fff"/>
<rect x="1308" y="803" width="148" height="1" fill="#808080"/><rect x="1308" y="803" width="1" height="17" fill="#808080"/><rect x="1308" y="820" width="148" height="1" fill="#fff"/><rect x="1455" y="803" width="1" height="18" fill="#fff"/>
<text x="1317.7" y="816.5" class="m" fill="#000" textLength="79.5" lengthAdjust="spacingAndGlyphs">Auto Scale Mode</text>
<rect x="1442" y="807" width="13" height="13" fill="#fff"/>
<g shape-rendering="auto" stroke="#909090" stroke-width="1"><path d="M1443.5 819.5 L1454.5 808.5 M1447.5 819.5 L1454.5 812.5 M1451.5 819.5 L1454.5 816.5"/></g>
<polygon points="1396.00,127.00 1401.00,131.50 1401.00,578.00 1398.00,583.00 94.50,583.00 90.50,578.00 90.50,574.50 1392.50,574.50 1392.50,127.00" fill="#808080" shape-rendering="auto"/>
<polygon points="90.50,124.50 1392.50,124.50 1395.50,127.50 1395.50,574.50 1392.50,577.50 90.50,577.50 87.50,574.50 87.50,127.50" fill="#fff" stroke="#000" stroke-width="1" shape-rendering="auto"/>
<line x1="91.0" y1="533.5" x2="1395.5" y2="533.5" stroke="#000" stroke-width="1" stroke-dasharray="3 2"/>
<line x1="91.0" y1="487.5" x2="1395.5" y2="487.5" stroke="#000" stroke-width="1" stroke-dasharray="3 2"/>
<line x1="91.0" y1="442.5" x2="1395.5" y2="442.5" stroke="#000" stroke-width="1" stroke-dasharray="3 2"/>
<line x1="91.0" y1="396.5" x2="1395.5" y2="396.5" stroke="#000" stroke-width="1" stroke-dasharray="3 2"/>
<line x1="91.0" y1="351.5" x2="1395.5" y2="351.5" stroke="#000" stroke-width="1" stroke-dasharray="3 2"/>
<line x1="91.0" y1="306.5" x2="1395.5" y2="306.5" stroke="#000" stroke-width="1" stroke-dasharray="3 2"/>
<line x1="91.0" y1="260.5" x2="1395.5" y2="260.5" stroke="#000" stroke-width="1" stroke-dasharray="3 2"/>
<line x1="91.0" y1="215.5" x2="1395.5" y2="215.5" stroke="#000" stroke-width="1" stroke-dasharray="3 2"/>
<line x1="91.0" y1="169.5" x2="1395.5" y2="169.5" stroke="#000" stroke-width="1" stroke-dasharray="3 2"/>
<line x1="188.5" y1="127" x2="188.5" y2="577.5" stroke="#000" stroke-width="1" stroke-dasharray="3 2"/>
<line x1="288.5" y1="127" x2="288.5" y2="577.5" stroke="#000" stroke-width="1" stroke-dasharray="3 2"/>
<line x1="389.5" y1="127" x2="389.5" y2="577.5" stroke="#000" stroke-width="1" stroke-dasharray="3 2"/>
<line x1="490.5" y1="127" x2="490.5" y2="577.5" stroke="#000" stroke-width="1" stroke-dasharray="3 2"/>
<line x1="590.5" y1="127" x2="590.5" y2="577.5" stroke="#000" stroke-width="1" stroke-dasharray="3 2"/>
<line x1="691.5" y1="127" x2="691.5" y2="577.5" stroke="#000" stroke-width="1" stroke-dasharray="3 2"/>
<line x1="792.5" y1="127" x2="792.5" y2="577.5" stroke="#000" stroke-width="1" stroke-dasharray="3 2"/>
<line x1="893.5" y1="127" x2="893.5" y2="577.5" stroke="#000" stroke-width="1" stroke-dasharray="3 2"/>
<line x1="993.5" y1="127" x2="993.5" y2="577.5" stroke="#000" stroke-width="1" stroke-dasharray="3 2"/>
<line x1="1094.5" y1="127" x2="1094.5" y2="577.5" stroke="#000" stroke-width="1" stroke-dasharray="3 2"/>
<line x1="1195.5" y1="127" x2="1195.5" y2="577.5" stroke="#000" stroke-width="1" stroke-dasharray="3 2"/>
<line x1="1295.5" y1="127" x2="1295.5" y2="577.5" stroke="#000" stroke-width="1" stroke-dasharray="3 2"/>
<rect x="84" y="569" width="4" height="1" fill="#000"/><rect x="1396" y="569" width="4" height="1" fill="#000"/>
<rect x="84" y="560" width="4" height="1" fill="#000"/><rect x="1396" y="560" width="4" height="1" fill="#000"/>
<rect x="84" y="551" width="4" height="1" fill="#000"/><rect x="1396" y="551" width="4" height="1" fill="#000"/>
<rect x="84" y="542" width="4" height="1" fill="#000"/><rect x="1396" y="542" width="4" height="1" fill="#000"/>
<rect x="84" y="533" width="4" height="1" fill="#000"/><rect x="1396" y="533" width="4" height="1" fill="#000"/>
<rect x="84" y="524" width="4" height="1" fill="#000"/><rect x="1396" y="524" width="4" height="1" fill="#000"/>
<rect x="84" y="514" width="4" height="1" fill="#000"/><rect x="1396" y="514" width="4" height="1" fill="#000"/>
<rect x="84" y="505" width="4" height="1" fill="#000"/><rect x="1396" y="505" width="4" height="1" fill="#000"/>
<rect x="84" y="496" width="4" height="1" fill="#000"/><rect x="1396" y="496" width="4" height="1" fill="#000"/>
<rect x="84" y="487" width="4" height="1" fill="#000"/><rect x="1396" y="487" width="4" height="1" fill="#000"/>
<rect x="84" y="478" width="4" height="1" fill="#000"/><rect x="1396" y="478" width="4" height="1" fill="#000"/>
<rect x="84" y="469" width="4" height="1" fill="#000"/><rect x="1396" y="469" width="4" height="1" fill="#000"/>
<rect x="84" y="460" width="4" height="1" fill="#000"/><rect x="1396" y="460" width="4" height="1" fill="#000"/>
<rect x="84" y="451" width="4" height="1" fill="#000"/><rect x="1396" y="451" width="4" height="1" fill="#000"/>
<rect x="84" y="442" width="4" height="1" fill="#000"/><rect x="1396" y="442" width="4" height="1" fill="#000"/>
<rect x="84" y="433" width="4" height="1" fill="#000"/><rect x="1396" y="433" width="4" height="1" fill="#000"/>
<rect x="84" y="424" width="4" height="1" fill="#000"/><rect x="1396" y="424" width="4" height="1" fill="#000"/>
<rect x="84" y="415" width="4" height="1" fill="#000"/><rect x="1396" y="415" width="4" height="1" fill="#000"/>
<rect x="84" y="405" width="4" height="1" fill="#000"/><rect x="1396" y="405" width="4" height="1" fill="#000"/>
<rect x="84" y="396" width="4" height="1" fill="#000"/><rect x="1396" y="396" width="4" height="1" fill="#000"/>
<rect x="84" y="387" width="4" height="1" fill="#000"/><rect x="1396" y="387" width="4" height="1" fill="#000"/>
<rect x="84" y="378" width="4" height="1" fill="#000"/><rect x="1396" y="378" width="4" height="1" fill="#000"/>
<rect x="84" y="369" width="4" height="1" fill="#000"/><rect x="1396" y="369" width="4" height="1" fill="#000"/>
<rect x="84" y="360" width="4" height="1" fill="#000"/><rect x="1396" y="360" width="4" height="1" fill="#000"/>
<rect x="84" y="351" width="4" height="1" fill="#000"/><rect x="1396" y="351" width="4" height="1" fill="#000"/>
<rect x="84" y="342" width="4" height="1" fill="#000"/><rect x="1396" y="342" width="4" height="1" fill="#000"/>
<rect x="84" y="333" width="4" height="1" fill="#000"/><rect x="1396" y="333" width="4" height="1" fill="#000"/>
<rect x="84" y="324" width="4" height="1" fill="#000"/><rect x="1396" y="324" width="4" height="1" fill="#000"/>
<rect x="84" y="315" width="4" height="1" fill="#000"/><rect x="1396" y="315" width="4" height="1" fill="#000"/>
<rect x="84" y="306" width="4" height="1" fill="#000"/><rect x="1396" y="306" width="4" height="1" fill="#000"/>
<rect x="84" y="297" width="4" height="1" fill="#000"/><rect x="1396" y="297" width="4" height="1" fill="#000"/>
<rect x="84" y="287" width="4" height="1" fill="#000"/><rect x="1396" y="287" width="4" height="1" fill="#000"/>
<rect x="84" y="278" width="4" height="1" fill="#000"/><rect x="1396" y="278" width="4" height="1" fill="#000"/>
<rect x="84" y="269" width="4" height="1" fill="#000"/><rect x="1396" y="269" width="4" height="1" fill="#000"/>
<rect x="84" y="260" width="4" height="1" fill="#000"/><rect x="1396" y="260" width="4" height="1" fill="#000"/>
<rect x="84" y="251" width="4" height="1" fill="#000"/><rect x="1396" y="251" width="4" height="1" fill="#000"/>
<rect x="84" y="242" width="4" height="1" fill="#000"/><rect x="1396" y="242" width="4" height="1" fill="#000"/>
<rect x="84" y="233" width="4" height="1" fill="#000"/><rect x="1396" y="233" width="4" height="1" fill="#000"/>
<rect x="84" y="224" width="4" height="1" fill="#000"/><rect x="1396" y="224" width="4" height="1" fill="#000"/>
<rect x="84" y="215" width="4" height="1" fill="#000"/><rect x="1396" y="215" width="4" height="1" fill="#000"/>
<rect x="84" y="206" width="4" height="1" fill="#000"/><rect x="1396" y="206" width="4" height="1" fill="#000"/>
<rect x="84" y="197" width="4" height="1" fill="#000"/><rect x="1396" y="197" width="4" height="1" fill="#000"/>
<rect x="84" y="188" width="4" height="1" fill="#000"/><rect x="1396" y="188" width="4" height="1" fill="#000"/>
<rect x="84" y="178" width="4" height="1" fill="#000"/><rect x="1396" y="178" width="4" height="1" fill="#000"/>
<rect x="84" y="169" width="4" height="1" fill="#000"/><rect x="1396" y="169" width="4" height="1" fill="#000"/>
<rect x="84" y="160" width="4" height="1" fill="#000"/><rect x="1396" y="160" width="4" height="1" fill="#000"/>
<rect x="84" y="151" width="4" height="1" fill="#000"/><rect x="1396" y="151" width="4" height="1" fill="#000"/>
<rect x="84" y="142" width="4" height="1" fill="#000"/><rect x="1396" y="142" width="4" height="1" fill="#000"/>
<rect x="84" y="133" width="4" height="1" fill="#000"/><rect x="1396" y="133" width="4" height="1" fill="#000"/>
<text x="74.5" y="583.0" class="b" font-size="11" textLength="6.6" lengthAdjust="spacingAndGlyphs">0</text>
<text x="1403" y="583.0" class="b" font-size="11" textLength="6.6" lengthAdjust="spacingAndGlyphs">0</text>
<text x="66.7" y="538.0" class="b" font-size="11" textLength="14.4" lengthAdjust="spacingAndGlyphs">25</text>
<text x="1403" y="538.0" class="b" font-size="11" textLength="14.4" lengthAdjust="spacingAndGlyphs">25</text>
<text x="66.7" y="492.0" class="b" font-size="11" textLength="14.4" lengthAdjust="spacingAndGlyphs">50</text>
<text x="1403" y="492.0" class="b" font-size="11" textLength="14.4" lengthAdjust="spacingAndGlyphs">50</text>
<text x="66.7" y="447.0" class="b" font-size="11" textLength="14.4" lengthAdjust="spacingAndGlyphs">75</text>
<text x="1403" y="447.0" class="b" font-size="11" textLength="14.4" lengthAdjust="spacingAndGlyphs">75</text>
<text x="58.9" y="401.0" class="b" font-size="11" textLength="22.2" lengthAdjust="spacingAndGlyphs">100</text>
<text x="1403" y="401.0" class="b" font-size="11" textLength="22.2" lengthAdjust="spacingAndGlyphs">100</text>
<text x="58.9" y="356.0" class="b" font-size="11" textLength="22.2" lengthAdjust="spacingAndGlyphs">125</text>
<text x="1403" y="356.0" class="b" font-size="11" textLength="22.2" lengthAdjust="spacingAndGlyphs">125</text>
<text x="58.9" y="311.0" class="b" font-size="11" textLength="22.2" lengthAdjust="spacingAndGlyphs">150</text>
<text x="1403" y="311.0" class="b" font-size="11" textLength="22.2" lengthAdjust="spacingAndGlyphs">150</text>
<text x="58.9" y="265.0" class="b" font-size="11" textLength="22.2" lengthAdjust="spacingAndGlyphs">175</text>
<text x="1403" y="265.0" class="b" font-size="11" textLength="22.2" lengthAdjust="spacingAndGlyphs">175</text>
<text x="58.9" y="220.0" class="b" font-size="11" textLength="22.2" lengthAdjust="spacingAndGlyphs">200</text>
<text x="1403" y="220.0" class="b" font-size="11" textLength="22.2" lengthAdjust="spacingAndGlyphs">200</text>
<text x="58.9" y="174.0" class="b" font-size="11" textLength="22.2" lengthAdjust="spacingAndGlyphs">225</text>
<text x="1403" y="174.0" class="b" font-size="11" textLength="22.2" lengthAdjust="spacingAndGlyphs">225</text>
<text x="58.9" y="129.0" class="b" font-size="11" textLength="22.2" lengthAdjust="spacingAndGlyphs">250</text>
<text x="1403" y="129.0" class="b" font-size="11" textLength="22.2" lengthAdjust="spacingAndGlyphs">250</text>
<polygon points="1396.00,591.00 1401.00,595.50 1401.00,748.00 1398.00,753.00 94.50,753.00 90.50,748.00 90.50,744.50 1392.50,744.50 1392.50,591.00" fill="#808080" shape-rendering="auto"/>
<polygon points="90.50,588.50 1392.50,588.50 1395.50,591.50 1395.50,744.50 1392.50,747.50 90.50,747.50 87.50,744.50 87.50,591.50" fill="#fff" stroke="#000" stroke-width="1" shape-rendering="auto"/>
<line x1="91.0" y1="708.5" x2="1395.5" y2="708.5" stroke="#000" stroke-width="1" stroke-dasharray="3 2"/>
<line x1="91.0" y1="668.5" x2="1395.5" y2="668.5" stroke="#000" stroke-width="1" stroke-dasharray="3 2"/>
<line x1="91.0" y1="628.5" x2="1395.5" y2="628.5" stroke="#000" stroke-width="1" stroke-dasharray="3 2"/>
<line x1="188.5" y1="592" x2="188.5" y2="747.5" stroke="#000" stroke-width="1" stroke-dasharray="3 2"/>
<line x1="288.5" y1="592" x2="288.5" y2="747.5" stroke="#000" stroke-width="1" stroke-dasharray="3 2"/>
<line x1="389.5" y1="592" x2="389.5" y2="747.5" stroke="#000" stroke-width="1" stroke-dasharray="3 2"/>
<line x1="490.5" y1="592" x2="490.5" y2="747.5" stroke="#000" stroke-width="1" stroke-dasharray="3 2"/>
<line x1="590.5" y1="592" x2="590.5" y2="747.5" stroke="#000" stroke-width="1" stroke-dasharray="3 2"/>
<line x1="691.5" y1="592" x2="691.5" y2="747.5" stroke="#000" stroke-width="1" stroke-dasharray="3 2"/>
<line x1="792.5" y1="592" x2="792.5" y2="747.5" stroke="#000" stroke-width="1" stroke-dasharray="3 2"/>
<line x1="893.5" y1="592" x2="893.5" y2="747.5" stroke="#000" stroke-width="1" stroke-dasharray="3 2"/>
<line x1="993.5" y1="592" x2="993.5" y2="747.5" stroke="#000" stroke-width="1" stroke-dasharray="3 2"/>
<line x1="1094.5" y1="592" x2="1094.5" y2="747.5" stroke="#000" stroke-width="1" stroke-dasharray="3 2"/>
<line x1="1195.5" y1="592" x2="1195.5" y2="747.5" stroke="#000" stroke-width="1" stroke-dasharray="3 2"/>
<line x1="1295.5" y1="592" x2="1295.5" y2="747.5" stroke="#000" stroke-width="1" stroke-dasharray="3 2"/>
<rect x="84" y="740" width="4" height="1" fill="#000"/><rect x="1396" y="740" width="4" height="1" fill="#000"/>
<rect x="84" y="732" width="4" height="1" fill="#000"/><rect x="1396" y="732" width="4" height="1" fill="#000"/>
<rect x="84" y="724" width="4" height="1" fill="#000"/><rect x="1396" y="724" width="4" height="1" fill="#000"/>
<rect x="84" y="716" width="4" height="1" fill="#000"/><rect x="1396" y="716" width="4" height="1" fill="#000"/>
<rect x="84" y="708" width="4" height="1" fill="#000"/><rect x="1396" y="708" width="4" height="1" fill="#000"/>
<rect x="84" y="700" width="4" height="1" fill="#000"/><rect x="1396" y="700" width="4" height="1" fill="#000"/>
<rect x="84" y="692" width="4" height="1" fill="#000"/><rect x="1396" y="692" width="4" height="1" fill="#000"/>
<rect x="84" y="684" width="4" height="1" fill="#000"/><rect x="1396" y="684" width="4" height="1" fill="#000"/>
<rect x="84" y="676" width="4" height="1" fill="#000"/><rect x="1396" y="676" width="4" height="1" fill="#000"/>
<rect x="84" y="668" width="4" height="1" fill="#000"/><rect x="1396" y="668" width="4" height="1" fill="#000"/>
<rect x="84" y="660" width="4" height="1" fill="#000"/><rect x="1396" y="660" width="4" height="1" fill="#000"/>
<rect x="84" y="652" width="4" height="1" fill="#000"/><rect x="1396" y="652" width="4" height="1" fill="#000"/>
<rect x="84" y="644" width="4" height="1" fill="#000"/><rect x="1396" y="644" width="4" height="1" fill="#000"/>
<rect x="84" y="636" width="4" height="1" fill="#000"/><rect x="1396" y="636" width="4" height="1" fill="#000"/>
<rect x="84" y="628" width="4" height="1" fill="#000"/><rect x="1396" y="628" width="4" height="1" fill="#000"/>
<rect x="84" y="620" width="4" height="1" fill="#000"/><rect x="1396" y="620" width="4" height="1" fill="#000"/>
<rect x="84" y="612" width="4" height="1" fill="#000"/><rect x="1396" y="612" width="4" height="1" fill="#000"/>
<rect x="84" y="604" width="4" height="1" fill="#000"/><rect x="1396" y="604" width="4" height="1" fill="#000"/>
<rect x="84" y="596" width="4" height="1" fill="#000"/><rect x="1396" y="596" width="4" height="1" fill="#000"/>
<text x="66.7" y="753.1" class="b" font-size="11" textLength="14.4" lengthAdjust="spacingAndGlyphs">50</text>
<text x="1403" y="753.1" class="b" font-size="11" textLength="14.4" lengthAdjust="spacingAndGlyphs">50</text>
<text x="58.9" y="713.0" class="b" font-size="11" textLength="22.2" lengthAdjust="spacingAndGlyphs">100</text>
<text x="1403" y="713.0" class="b" font-size="11" textLength="22.2" lengthAdjust="spacingAndGlyphs">100</text>
<text x="58.9" y="673.0" class="b" font-size="11" textLength="22.2" lengthAdjust="spacingAndGlyphs">150</text>
<text x="1403" y="673.0" class="b" font-size="11" textLength="22.2" lengthAdjust="spacingAndGlyphs">150</text>
<text x="58.9" y="633.0" class="b" font-size="11" textLength="22.2" lengthAdjust="spacingAndGlyphs">200</text>
<text x="1403" y="633.0" class="b" font-size="11" textLength="22.2" lengthAdjust="spacingAndGlyphs">200</text>
<text x="58.9" y="593.0" class="b" font-size="11" textLength="22.2" lengthAdjust="spacingAndGlyphs">250</text>
<text x="1403" y="593.0" class="b" font-size="11" textLength="22.2" lengthAdjust="spacingAndGlyphs">250</text>
<rect x="107" y="748" width="1" height="3" fill="#000"/>
<rect x="127" y="748" width="1" height="3" fill="#000"/>
<rect x="147" y="748" width="1" height="3" fill="#000"/>
<rect x="167" y="748" width="1" height="3" fill="#000"/>
<rect x="188" y="748" width="1" height="3" fill="#000"/>
<rect x="208" y="748" width="1" height="3" fill="#000"/>
<rect x="228" y="748" width="1" height="3" fill="#000"/>
<rect x="248" y="748" width="1" height="3" fill="#000"/>
<rect x="268" y="748" width="1" height="3" fill="#000"/>
<rect x="288" y="748" width="1" height="3" fill="#000"/>
<rect x="308" y="748" width="1" height="3" fill="#000"/>
<rect x="329" y="748" width="1" height="3" fill="#000"/>
<rect x="349" y="748" width="1" height="3" fill="#000"/>
<rect x="369" y="748" width="1" height="3" fill="#000"/>
<rect x="389" y="748" width="1" height="3" fill="#000"/>
<rect x="409" y="748" width="1" height="3" fill="#000"/>
<rect x="429" y="748" width="1" height="3" fill="#000"/>
<rect x="449" y="748" width="1" height="3" fill="#000"/>
<rect x="470" y="748" width="1" height="3" fill="#000"/>
<rect x="490" y="748" width="1" height="3" fill="#000"/>
<rect x="510" y="748" width="1" height="3" fill="#000"/>
<rect x="530" y="748" width="1" height="3" fill="#000"/>
<rect x="550" y="748" width="1" height="3" fill="#000"/>
<rect x="570" y="748" width="1" height="3" fill="#000"/>
<rect x="590" y="748" width="1" height="3" fill="#000"/>
<rect x="611" y="748" width="1" height="3" fill="#000"/>
<rect x="631" y="748" width="1" height="3" fill="#000"/>
<rect x="651" y="748" width="1" height="3" fill="#000"/>
<rect x="671" y="748" width="1" height="3" fill="#000"/>
<rect x="691" y="748" width="1" height="3" fill="#000"/>
<rect x="711" y="748" width="1" height="3" fill="#000"/>
<rect x="731" y="748" width="1" height="3" fill="#000"/>
<rect x="752" y="748" width="1" height="3" fill="#000"/>
<rect x="772" y="748" width="1" height="3" fill="#000"/>
<rect x="792" y="748" width="1" height="3" fill="#000"/>
<rect x="812" y="748" width="1" height="3" fill="#000"/>
<rect x="832" y="748" width="1" height="3" fill="#000"/>
<rect x="852" y="748" width="1" height="3" fill="#000"/>
<rect x="872" y="748" width="1" height="3" fill="#000"/>
<rect x="893" y="748" width="1" height="3" fill="#000"/>
<rect x="913" y="748" width="1" height="3" fill="#000"/>
<rect x="933" y="748" width="1" height="3" fill="#000"/>
<rect x="953" y="748" width="1" height="3" fill="#000"/>
<rect x="973" y="748" width="1" height="3" fill="#000"/>
<rect x="993" y="748" width="1" height="3" fill="#000"/>
<rect x="1013" y="748" width="1" height="3" fill="#000"/>
<rect x="1034" y="748" width="1" height="3" fill="#000"/>
<rect x="1054" y="748" width="1" height="3" fill="#000"/>
<rect x="1074" y="748" width="1" height="3" fill="#000"/>
<rect x="1094" y="748" width="1" height="3" fill="#000"/>
<rect x="1114" y="748" width="1" height="3" fill="#000"/>
<rect x="1134" y="748" width="1" height="3" fill="#000"/>
<rect x="1154" y="748" width="1" height="3" fill="#000"/>
<rect x="1175" y="748" width="1" height="3" fill="#000"/>
<rect x="1195" y="748" width="1" height="3" fill="#000"/>
<rect x="1215" y="748" width="1" height="3" fill="#000"/>
<rect x="1235" y="748" width="1" height="3" fill="#000"/>
<rect x="1255" y="748" width="1" height="3" fill="#000"/>
<rect x="1275" y="748" width="1" height="3" fill="#000"/>
<rect x="1295" y="748" width="1" height="3" fill="#000"/>
<rect x="1316" y="748" width="1" height="3" fill="#000"/>
<rect x="1336" y="748" width="1" height="3" fill="#000"/>
<rect x="1356" y="748" width="1" height="3" fill="#000"/>
<rect x="1376" y="748" width="1" height="3" fill="#000"/>
<text x="78.3" y="764" class="b" font-size="11" textLength="18.4" lengthAdjust="spacingAndGlyphs">1.0</text>
<text x="179.3" y="764" class="b" font-size="11" textLength="18.4" lengthAdjust="spacingAndGlyphs">1.5</text>
<text x="279.3" y="764" class="b" font-size="11" textLength="18.4" lengthAdjust="spacingAndGlyphs">2.0</text>
<text x="380.3" y="764" class="b" font-size="11" textLength="18.4" lengthAdjust="spacingAndGlyphs">2.5</text>
<text x="481.3" y="764" class="b" font-size="11" textLength="18.4" lengthAdjust="spacingAndGlyphs">3.0</text>
<text x="581.3" y="764" class="b" font-size="11" textLength="18.4" lengthAdjust="spacingAndGlyphs">3.5</text>
<text x="682.3" y="764" class="b" font-size="11" textLength="18.4" lengthAdjust="spacingAndGlyphs">4.0</text>
<text x="783.3" y="764" class="b" font-size="11" textLength="18.4" lengthAdjust="spacingAndGlyphs">4.5</text>
<text x="884.3" y="764" class="b" font-size="11" textLength="18.4" lengthAdjust="spacingAndGlyphs">5.0</text>
<text x="984.3" y="764" class="b" font-size="11" textLength="18.4" lengthAdjust="spacingAndGlyphs">5.5</text>
<text x="1085.3" y="764" class="b" font-size="11" textLength="18.4" lengthAdjust="spacingAndGlyphs">6.0</text>
<text x="1186.3" y="764" class="b" font-size="11" textLength="18.4" lengthAdjust="spacingAndGlyphs">6.5</text>
<text x="1286.3" y="764" class="b" font-size="11" textLength="18.4" lengthAdjust="spacingAndGlyphs">7.0</text>
<text x="1387.3" y="764" class="b" font-size="11" textLength="18.4" lengthAdjust="spacingAndGlyphs">7.5</text>
<text x="678.2" y="111.4" class="b" font-size="11" textLength="126.4" lengthAdjust="spacing">DYNOJET RESEARCH</text>
<text x="1300.3" y="111.4" class="b" font-size="11" textLength="140.8" lengthAdjust="spacing" style="white-space:pre">CF: SAE  Smoothing: 5</text>
<text x="649.6" y="785.9" class="b" font-size="12" textLength="183" lengthAdjust="spacing">Engine Speed (RPM x1000)</text>
<text transform="translate(50.8,388) rotate(-90)" class="b" font-size="12" textLength="75.6" lengthAdjust="spacing">Power (hp)</text>
<text transform="translate(50.8,705.6) rotate(-90)" class="b" font-size="12" textLength="78.4" lengthAdjust="spacing">*Manifold P</text>
<text transform="translate(1431,301) rotate(90)" class="b" font-size="12" textLength="98" lengthAdjust="spacing">Torque (ft-lbs)</text>
<text transform="translate(1431,646) rotate(90)" class="b" font-size="12" textLength="44" lengthAdjust="spacing">*Boost</text>
<g fill="none" shape-rendering="auto" stroke-linejoin="round">
<polyline points="235.50,437.50 257.50,423.75 277.50,411.25 292.50,403.25 305.00,398.75 325.00,391.25 345.00,385.50 360.00,380.75 375.00,375.00 390.00,366.25 405.00,360.00 420.00,352.50 432.50,345.00 445.00,337.50 455.00,335.00 467.50,330.50 480.00,322.00 488.75,318.75 495.00,315.00 507.50,308.75 517.50,305.00 530.00,301.25 540.00,301.75 545.00,300.00 557.50,295.50 570.00,294.25 580.00,291.25 592.50,287.00 612.50,286.25 625.00,281.25 632.50,282.50 647.50,275.00 671.50,269.50 680.00,265.50 692.50,253.75 705.00,252.00 716.25,248.00 725.00,250.50 735.00,245.00 742.50,242.50 752.50,245.00 762.50,239.50 775.00,238.00 787.50,235.00 797.50,237.50 807.50,236.25 820.00,240.50 832.50,237.00 842.50,239.50 860.00,245.00 872.50,241.25 885.00,243.00 902.50,242.50 915.00,240.50 930.00,241.25 942.50,232.00 946.25,231.75 951.25,232.50 961.25,236.75 975.00,232.50 992.50,232.50 1005.00,237.50 1012.50,237.50 1022.50,235.00 1032.50,236.25 1042.50,234.25 1047.50,234.50 1055.00,238.75 1062.50,236.25 1067.50,237.50 1078.75,246.75 1087.50,246.75 1100.00,243.00 1105.00,243.25 1115.00,249.25 1125.00,251.75 1140.00,249.25 1147.50,250.00 1162.50,253.75 1168.75,257.00 1176.25,262.50 1182.50,263.75 1196.25,263.75 1206.25,270.00 1212.50,270.50 1220.00,266.25 1232.50,268.25 1240.00,270.75 1245.00,275.00 1251.25,285.50" stroke="#ff8080" stroke-width="1"/>
<polyline points="230.00,426.25 245.00,420.50 270.00,410.50 288.75,405.00 305.00,400.00 325.00,395.50 340.00,392.00 360.00,387.00 375.00,380.50 390.00,375.00 397.50,370.50 405.00,368.75 412.50,362.50 432.50,353.75 445.00,347.00 455.00,341.25 470.00,335.00 480.00,330.75 488.75,323.00 507.50,315.00 517.50,306.25 530.00,300.00 540.00,295.50 550.00,286.25 562.50,277.50 572.50,272.50 580.00,267.50 590.00,261.25 597.50,260.50 608.75,254.25 617.50,252.00 625.00,248.25 630.00,249.25 637.50,252.50 650.00,243.75 665.00,240.50 671.50,241.25 678.75,246.25 685.00,243.75 690.00,242.00 700.00,243.50 715.00,244.00 730.00,243.50 742.50,242.50 752.50,240.50 765.00,240.00 780.00,233.75 787.50,232.00 797.50,233.75 807.50,226.25 817.50,225.00 830.00,226.75 841.25,224.25 852.50,228.00 865.00,222.50 878.75,229.50 895.00,225.00 905.00,218.00 917.50,225.75 927.50,221.25 937.50,221.25 947.50,213.75 956.25,206.25 960.00,207.00 968.75,210.50 978.75,205.50 986.25,205.50 993.75,211.25 997.50,211.75 1007.50,208.00 1020.00,211.25 1026.25,211.25 1043.75,219.50 1053.75,217.50 1062.50,219.50 1072.50,220.50 1083.75,229.25 1088.75,228.75 1095.00,224.50 1107.50,228.75 1117.50,225.50 1131.25,237.50 1135.00,237.50 1143.75,232.50 1155.00,237.50 1167.50,237.50 1173.75,239.50 1182.50,245.50 1193.75,243.00 1202.50,247.50 1207.50,247.50 1211.25,250.00 1218.75,263.75 1227.00,259.50 1237.50,267.50 1246.25,261.25 1250.00,262.50 1265.00,277.00 1271.25,277.50" stroke="#8080ff" stroke-width="1"/>
<polyline points="235.50,531.25 288.75,512.00 320.00,503.00 357.50,491.25 390.00,477.50 420.00,463.75 445.00,451.25 470.00,440.00 480.00,433.00 495.00,425.00 510.00,417.50 527.50,409.25 542.50,405.75 557.50,398.00 570.00,393.75 580.00,388.75 590.00,383.75 602.50,379.50 612.50,377.00 625.00,370.00 632.50,369.25 647.50,358.75 662.50,352.50 671.50,348.75 680.00,343.75 692.50,330.75 705.00,325.00 713.75,319.25 723.75,319.25 735.00,310.00 742.50,305.75 752.50,305.75 762.50,297.50 775.00,292.50 787.50,285.50 795.00,285.50 805.00,280.50 817.50,280.50 832.50,273.00 845.00,273.00 860.00,272.50 872.50,263.75 885.00,262.00 897.50,255.75 907.50,253.75 917.50,248.75 927.50,247.00 940.00,234.50 946.25,230.50 961.25,230.00 977.50,220.00 992.50,216.25 1005.00,217.50 1022.50,209.50 1030.00,207.50 1041.25,201.25 1050.00,201.25 1056.25,202.00 1063.75,197.00 1067.50,197.50 1077.50,203.75 1085.00,202.00 1095.00,197.00 1102.50,193.25 1107.50,193.25 1117.50,196.75 1125.00,195.00 1140.00,188.00 1152.50,186.75 1163.75,186.25 1175.00,192.50 1181.25,192.50 1190.00,190.00 1197.50,188.00 1207.50,193.75 1212.50,191.25 1221.25,185.00 1227.50,184.25 1237.50,184.25 1243.75,187.50 1248.75,193.75 1251.25,200.50" stroke="#ff0000" stroke-width="1.1"/>
<polyline points="230.00,528.25 288.75,512.00 320.00,503.75 357.50,493.00 390.00,481.25 420.00,467.50 445.00,456.25 470.00,443.75 490.00,431.50 505.00,425.00 527.50,410.00 547.50,396.25 562.50,385.00 575.00,378.75 580.00,373.75 590.00,367.50 597.50,365.00 612.50,355.00 625.00,348.75 637.50,345.00 650.00,335.00 665.00,329.25 671.50,328.25 677.50,329.25 690.00,323.25 700.00,320.00 710.00,315.75 722.50,313.75 735.00,310.00 742.50,305.75 752.50,300.00 762.50,297.00 775.00,291.25 787.50,283.00 792.50,283.00 800.00,278.75 810.00,269.50 820.00,266.25 830.00,263.75 840.00,258.75 850.00,258.00 855.00,256.25 865.00,248.25 870.00,248.25 875.00,250.50 880.00,250.00 887.50,245.00 895.00,241.25 905.00,230.50 915.00,233.75 920.00,233.25 930.00,227.00 940.00,222.50 947.50,213.75 957.50,201.25 970.00,201.25 981.25,191.25 986.25,191.25 992.50,193.75 1000.00,190.00 1006.25,186.25 1017.50,185.00 1027.50,182.50 1040.00,185.50 1045.00,185.00 1056.25,178.75 1065.00,178.25 1072.50,176.25 1083.75,183.75 1090.00,180.00 1097.50,172.50 1105.00,174.50 1116.25,167.00 1120.00,167.50 1130.00,177.50 1136.25,175.00 1143.75,167.50 1148.75,167.00 1155.00,169.50 1165.00,166.25 1172.50,165.00 1182.50,169.50 1186.25,168.75 1195.00,163.00 1201.25,165.75 1207.50,165.00 1211.25,167.50 1218.75,181.25 1227.50,173.75 1235.00,181.25 1247.50,170.00 1251.25,172.00 1263.75,185.00 1267.50,185.50 1271.25,184.25" stroke="#0000ff" stroke-width="1.1"/>
<polyline points="230.00,702.50 236.25,705.50 241.25,705.50 247.50,701.25 256.25,701.25 270.00,698.75 287.50,695.50 300.00,695.00 307.50,691.75 315.00,689.50 325.00,688.00 337.50,687.50 348.75,685.00 355.00,685.00 362.50,686.75 375.00,685.75 390.00,685.75 402.50,683.00 415.00,676.25 425.00,672.00 440.00,671.25 460.00,668.75 470.00,665.00 480.00,662.50 495.00,661.25 512.50,659.50 530.00,658.00 545.00,656.25 575.00,655.00 580.00,653.00 592.50,649.50 617.50,646.25 642.50,643.75 665.00,642.00 671.50,638.75 680.00,635.00 690.00,631.25 702.50,627.00 712.50,625.75 725.00,628.75 740.00,631.25 755.00,632.50 770.00,630.50 787.50,628.00 805.00,626.25 812.50,627.00 830.00,631.25 845.00,634.50 857.50,635.75 872.50,633.00 892.50,632.50 915.00,634.50 935.00,632.50 940.00,632.50 955.00,630.75 977.50,630.75 987.50,634.25 997.50,637.50 1006.25,637.50 1022.50,633.00 1035.00,630.75 1047.50,630.00 1065.00,633.25 1077.50,633.25 1092.50,629.50 1110.00,629.50 1130.00,631.25 1152.50,632.50 1177.50,634.25 1192.50,634.25 1205.00,632.50 1220.00,629.50 1225.00,630.75 1228.75,635.00 1235.00,647.50 1240.00,665.00 1245.00,687.50 1251.25,719.50" stroke="#ff8080" stroke-width="1"/>
<polyline points="226.25,703.00 245.00,701.25 270.00,698.75 288.75,697.00 302.50,696.25 320.00,694.25 345.00,691.25 370.00,688.00 390.00,687.00 402.50,683.75 420.00,681.25 445.00,677.50 460.00,675.00 480.00,669.50 495.00,666.25 512.50,661.25 530.00,657.50 547.50,652.50 567.50,649.25 580.00,646.25 592.50,643.00 605.00,640.00 620.00,638.00 637.50,637.00 671.50,637.00 692.50,638.00 730.00,636.25 775.00,635.00 780.00,636.25 797.50,636.25 815.00,633.75 830.00,632.50 852.50,631.25 865.00,632.00 905.00,631.25 940.00,630.75 945.00,630.00 977.50,629.50 978.75,628.25 992.50,628.25 995.00,629.25 1027.50,629.25 1030.00,628.25 1047.50,628.25 1050.00,629.25 1150.00,629.25 1152.50,628.25 1162.50,628.00 1165.00,627.00 1192.50,627.00 1195.00,628.00 1211.25,628.00 1212.50,627.00 1248.75,627.00 1252.50,628.00 1257.50,628.75 1262.50,631.25 1266.25,635.00 1270.50,641.25" stroke="#0000ff" stroke-width="2.4"/>
</g>
<rect x="155" y="149" width="7" height="15" fill="#0000ff"/><rect x="162" y="149" width="7" height="15" fill="#8080ff"/>
<rect x="155" y="164" width="7" height="15" fill="#ff0000"/><rect x="162" y="164" width="7" height="15" fill="#ff8080"/>
<rect x="154.5" y="148.5" width="15" height="15" fill="none" stroke="#000"/><rect x="154.5" y="163.5" width="15" height="15" fill="none" stroke="#000"/>
<text x="173" y="159" class="b" font-size="11" textLength="494" lengthAdjust="spacing">AidanMiata_1point6Trubo_043.drf Max Power = 228.09 Max Torque = 205.26</text>
<text x="173" y="174" class="b" font-size="11" textLength="494" lengthAdjust="spacing">AidanMiata_1point6Trubo_028.drf Max Power = 216.93 Max Torque = 190.61</text>
<rect x="154" y="597" width="7" height="15" fill="#0000ff"/><rect x="161" y="597" width="7" height="15" fill="#8080ff"/>
<rect x="154" y="612" width="7" height="15" fill="#ff0000"/><rect x="161" y="612" width="7" height="15" fill="#ff8080"/>
<rect x="153.5" y="596.5" width="15" height="15" fill="none" stroke="#000"/><rect x="153.5" y="611.5" width="15" height="15" fill="none" stroke="#000"/>
<text x="172" y="607" class="b" font-size="11" textLength="390" lengthAdjust="spacing">AidanMiata_1point6Trubo_043.drf Max *Manifold P = 200.78</text>
<text x="172" y="621.8" class="b" font-size="11" textLength="359" lengthAdjust="spacing">AidanMiata_1point6Trubo_028.drf Max *Boost = 202.56</text>
<rect x="671" y="125" width="1" height="453" fill="#000"/><rect x="671" y="589" width="1" height="159" fill="#000"/>
<rect x="650" y="328" width="21" height="1" fill="#000"/>
<text x="597.5" y="332.5" class="b" font-size="11" textLength="41.8" lengthAdjust="spacing">137.33</text>
<circle cx="650" cy="328.2" r="4.2" fill="#0000ff" shape-rendering="auto"/>
<rect x="650" y="350" width="21" height="1" fill="#000"/>
<text x="597.5" y="353.8" class="b" font-size="11" textLength="41.8" lengthAdjust="spacing">125.98</text>
<circle cx="650" cy="349.5" r="4.2" fill="#ff0000" shape-rendering="auto"/>
<rect x="671" y="242" width="19" height="1" fill="#000"/>
<text x="700.8" y="246.3" class="b" font-size="11" textLength="41.8" lengthAdjust="spacing">184.95</text>
<circle cx="690" cy="242" r="4.2" fill="#8080ff" shape-rendering="auto"/>
<rect x="671" y="269" width="19" height="1" fill="#000"/>
<text x="700.8" y="273.5" class="b" font-size="11" textLength="41.8" lengthAdjust="spacing">169.65</text>
<circle cx="690" cy="269.2" r="4.2" fill="#ff8080" shape-rendering="auto"/>
<rect x="650" y="637" width="21" height="1" fill="#000"/>
<text x="597.5" y="641.3" class="b" font-size="11" textLength="41.8" lengthAdjust="spacing">187.73</text>
<circle cx="650" cy="637" r="4.2" fill="#0000ff" shape-rendering="auto"/>
<rect x="671" y="640" width="19" height="1" fill="#000"/>
<text x="700.8" y="644.5" class="b" font-size="11" textLength="41.8" lengthAdjust="spacing">184.75</text>
<circle cx="690" cy="640.2" r="4.2" fill="#ff8080" shape-rendering="auto"/>
<text x="580" y="736.8" class="b" font-size="11" textLength="60" lengthAdjust="spacing">X = 3.900</text>
<line x1="640.5" y1="733.5" x2="671" y2="747" stroke="#000" stroke-width="1" shape-rendering="auto"/>
</svg></body></html>
